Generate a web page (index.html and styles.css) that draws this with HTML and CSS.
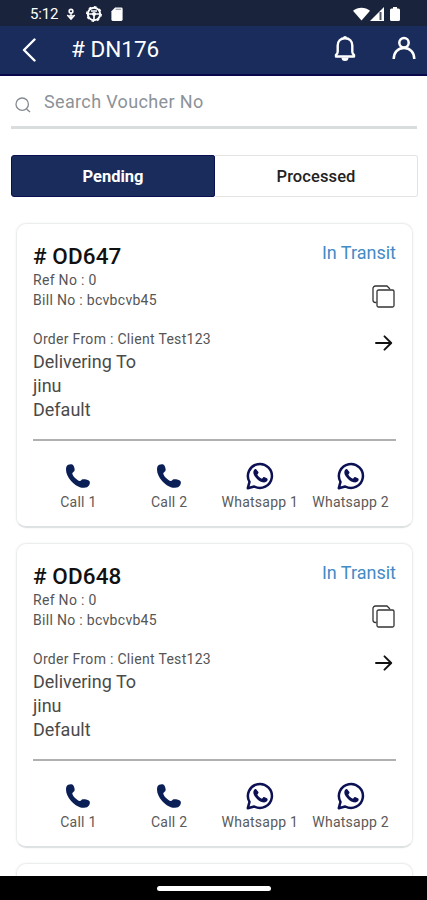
FILE: index.html
```html
<!DOCTYPE html>
<html lang="en">
<head>
    <meta charset="UTF-8">
    <meta name="viewport" content="width=device-width, initial-scale=1.0">
    <title># DN176</title>
    <link rel="stylesheet" href="styles.css">
</head>
<body>
    <!-- Shared icons -->
    <svg class="icon-defs" width="0" height="0">
        <symbol id="icon-copy" viewBox="0 0 23 23">
            <path d="M4.500 17.500H3.500a2.500 2.500 0 0 1-2.500-2.500V3.500A2.500 2.500 0 0 1 3.500 1h11.500l3 3" fill="none" stroke="currentColor" stroke-width="1.300"/>
            <rect x="5" y="5" width="17" height="17" rx="1.500" fill="none" stroke="currentColor" stroke-width="1.300"/>
        </symbol>
        <symbol id="icon-arrow" viewBox="0 0 18 16">
            <path d="M1 8h15M9.500 1.300L16.200 8l-6.700 6.700" fill="none" stroke="currentColor" stroke-width="1.900" stroke-linecap="round" stroke-linejoin="round"/>
        </symbol>
        <symbol id="icon-call" viewBox="0 0 24 24">
            <path d="M2.200.8C4 0 6.300-.1 7.200 1.200c1 1.500 1.600 3.500 1.400 5-.2 1.500-1.700 1.900-2.200 2.800-.5 1 1.100 3.300 2.700 5 1.600 1.600 3.700 3.200 4.800 3 1-.2 1.600-1.600 3-1.800 1.600-.2 4.200.3 5.900 1.200 1.600.9 1.200 3.200.3 4.900-1 1.800-3.300 2.700-5.800 2.500-4.500-.4-9-3.300-12.200-6.900C1.900 13.300 0 9.500 0 5.500 0 3.300.6 1.600 2.200.8z" fill="currentColor"/>
        </symbol>
        <symbol id="icon-whatsapp" viewBox="0 0 28 28">
            <path d="M1.800 26.200l1.700-6.300A12 12 0 1 1 8.200 24.500z" fill="none" stroke="currentColor" stroke-width="2.500" stroke-linejoin="round"/>
            <path d="M10.200 7.200c-.7-.4-1.500-.1-2 .5-1.300 1.600-1.100 3.800.2 6.100 2 3.400 5 5.700 8.200 6.500 2.100.5 4.300-.3 4.900-2 .3-.9.100-1.600-.6-2l-2.300-1.100c-.6-.3-1.100-.2-1.500.3l-1.100 1.300c-2.100-.8-3.700-2.300-4.700-4.300l1-1.200c.3-.4.3-.8.100-1.300z" fill="currentColor"/>
        </symbol>
    </svg>

    <div class="status-bar">
        <span class="time">5:12</span>
        <svg class="status-mic" viewBox="0 0 10 14">
            <circle cx="5" cy="3.500" r="2" fill="none" stroke="currentColor" stroke-width="1.700"/>
            <path d="M1 7.500l4 4.500 4-4.500M1.500 8.500h7M5 6v6" fill="none" stroke="currentColor" stroke-width="1.500"/>
        </svg>
        <svg class="status-wheel" viewBox="0 0 16 16">
            <circle cx="8" cy="8" r="6.200" fill="none" stroke="currentColor" stroke-width="2"/>
            <path d="M2 8h12M8 8v6M5 5h6" fill="none" stroke="currentColor" stroke-width="1.700"/>
            <circle cx="8" cy="8" r="7.300" fill="none" stroke="currentColor" stroke-width="1.300" stroke-dasharray="2.500 3.200"/>
            <circle cx="8" cy="8" r="2" fill="currentColor"/>
        </svg>
        <svg class="status-card" viewBox="0 0 12 15">
            <path d="M4 .5h6.500A1.500 1.500 0 0 1 12 2v11.500a1.500 1.500 0 0 1-1.500 1.500h-9A1.500 1.500 0 0 1 0 13.500V4.500z" fill="currentColor"/>
            <path d="M4.500 2.500h6" stroke="#a5a8b0" stroke-width="1.500"/>
        </svg>
        <div class="status-right">
            <svg class="status-wifi" viewBox="0 0 18 14">
                <path d="M0 3.500C5-.8 13-.8 18 3.500L9 14z" fill="currentColor"/>
            </svg>
            <svg class="status-signal" viewBox="0 0 14 14">
                <path d="M0 14L14 0v14z" fill="currentColor"/>
                <path d="M10.500 5v8" stroke="#4c5262" stroke-width="2"/>
            </svg>
            <svg class="status-battery" viewBox="0 0 10 14">
                <path d="M3 0h4v1.500h1.500A1.500 1.500 0 0 1 10 3v9.500A1.500 1.500 0 0 1 8.500 14h-7A1.500 1.500 0 0 1 0 12.500V3a1.500 1.500 0 0 1 1.500-1.500H3z" fill="currentColor"/>
            </svg>
        </div>
    </div>

    <header class="header">
        <svg class="back" viewBox="0 0 14 24">
            <path d="M12.500 1.500L2 12l10.500 10.500" fill="none" stroke="currentColor" stroke-width="2.400" stroke-linecap="round" stroke-linejoin="round"/>
        </svg>
        <h1># DN176</h1>
        <svg class="bell" viewBox="0 0 22 26">
            <path d="M11 2.200c-4.500 0-7.300 3.200-7.300 7.300v6.300c0 1.200-.5 2.200-1.700 3.200v1.500h18V19c-1.200-1-1.700-2-1.700-3.200V9.500c0-4.100-2.800-7.300-7.300-7.300z" fill="none" stroke="currentColor" stroke-width="2.400" stroke-linejoin="round"/>
            <path d="M9 2a2 2 0 0 1 4 0zM7.500 21.500h7a3.500 3.500 0 0 1-7 0z" fill="currentColor"/>
        </svg>
        <svg class="user" viewBox="0 0 24 24">
            <circle cx="12" cy="6.800" r="4.700" fill="none" stroke="currentColor" stroke-width="2.500"/>
            <path d="M1.700 23c0-6.500 4-11 10.300-11s10.300 4.500 10.300 11" fill="none" stroke="currentColor" stroke-width="2.500"/>
        </svg>
    </header>

    <main class="content">
        <div class="search">
            <svg class="search-icon" viewBox="0 0 16 16">
                <circle cx="7.200" cy="7.200" r="6.200" fill="none" stroke="currentColor" stroke-width="1.300"/>
                <path d="M11.500 12l3.500 3" stroke="currentColor" stroke-width="1.500"/>
            </svg>
            <span class="placeholder">Search Voucher No</span>
        </div>

        <div class="tabs">
            <div class="tab active">Pending</div>
            <div class="tab">Processed</div>
        </div>

        <div class="orders">
            <div class="card">
                <div class="card-body">
                    <div class="details">
                        <h2># OD647</h2>
                        <p class="small">Ref No : 0</p>
                        <p class="small bill">Bill No : bcvbcvb45</p>
                        <p class="small">Order From : Client Test123</p>
                        <p>Delivering To</p>
                        <p>jinu</p>
                        <p>Default</p>
                    </div>
                    <div class="side">
                        <span class="status">In Transit</span>
                        <svg class="copy"><use href="#icon-copy"/></svg>
                        <svg class="arrow"><use href="#icon-arrow"/></svg>
                    </div>
                </div>
                <div class="actions">
                    <div class="action"><svg class="call"><use href="#icon-call"/></svg><span>Call 1</span></div>
                    <div class="action"><svg class="call"><use href="#icon-call"/></svg><span>Call 2</span></div>
                    <div class="action"><svg><use href="#icon-whatsapp"/></svg><span>Whatsapp 1</span></div>
                    <div class="action"><svg><use href="#icon-whatsapp"/></svg><span>Whatsapp 2</span></div>
                </div>
            </div>

            <div class="card">
                <div class="card-body">
                    <div class="details">
                        <h2># OD648</h2>
                        <p class="small">Ref No : 0</p>
                        <p class="small bill">Bill No : bcvbcvb45</p>
                        <p class="small">Order From : Client Test123</p>
                        <p>Delivering To</p>
                        <p>jinu</p>
                        <p>Default</p>
                    </div>
                    <div class="side">
                        <span class="status">In Transit</span>
                        <svg class="copy"><use href="#icon-copy"/></svg>
                        <svg class="arrow"><use href="#icon-arrow"/></svg>
                    </div>
                </div>
                <div class="actions">
                    <div class="action"><svg class="call"><use href="#icon-call"/></svg><span>Call 1</span></div>
                    <div class="action"><svg class="call"><use href="#icon-call"/></svg><span>Call 2</span></div>
                    <div class="action"><svg><use href="#icon-whatsapp"/></svg><span>Whatsapp 1</span></div>
                    <div class="action"><svg><use href="#icon-whatsapp"/></svg><span>Whatsapp 2</span></div>
                </div>
            </div>

            <div class="card"></div>
        </div>
    </main>

    <div class="nav-bar"><div class="nav-handle"></div></div>
</body>
</html>
```

FILE: styles.css
```css
* { box-sizing: border-box; }
body { font-family: Roboto, sans-serif; margin: 0; height: 900px; overflow: hidden; display: flex; flex-direction: column; background: #fff; color: #4a4a4a; }
h1, h2, p { margin: 0; }
svg { display: block; flex: none; }
.icon-defs { position: absolute; }

/* Status bar */
.status-bar { flex: none; height: 26px; padding: 2px 27px 0 30px; display: flex; align-items: center; background: #1a233c; color: #fff; }
.time { width: 36px; font-size: 15px; letter-spacing: -0.2px; }
.status-mic { width: 10px; height: 13px; }
.status-wheel { width: 16px; height: 16px; margin-left: 10px; }
.status-card { width: 12px; height: 14px; margin-left: 9px; }
.status-right { display: flex; align-items: center; margin: -1px 0 0 auto; }
.status-wifi { width: 17px; height: 14px; }
.status-signal { width: 14px; height: 14px; }
.status-battery { width: 10px; height: 14px; margin-left: 6px; }

/* Header */
.header { flex: none; height: 50px; padding: 0 11px 1px 22px; display: flex; align-items: center; background: #1a2c5b; border-bottom: 2px solid #09084d; color: #fff; }
.back { width: 14px; height: 24px; }
.header h1 { margin: -2px 0 0 35px; font-size: 22.5px; font-weight: 400; line-height: 28px; }
.bell { width: 22px; height: 26px; margin: -2px 0 0 auto; }
.user { width: 24px; height: 24px; margin: -3px 0 0 36px; }

.content { flex: 1; min-height: 0; overflow: hidden; padding: 0 9px 0 11px; }
.search { height: 53px; margin-right: 1px; padding: 0 4px; display: flex; align-items: center; border-bottom: 3px solid #dadddd; color: #858b90; }
.search-icon { width: 16px; height: 16px; margin-top: 7px; }
.placeholder { margin-left: 13px; font-size: 18px; letter-spacing: 0.35px; color: #8c9298; }

.tabs { display: flex; height: 42px; margin-top: 26px; }
.tab { flex: 1; padding-top: 1px; display: flex; align-items: center; justify-content: center; border: 1px solid #e2e4e4; border-left: none; border-radius: 0 3px 3px 0; font-size: 16.5px; letter-spacing: 0.1px; font-weight: 500; color: #222; }
.tab.active { background: #1a2c5b; border: 1px solid #0b1052; border-radius: 3px 2px 2px 3px; color: #fff; font-weight: 700; letter-spacing: 0; }

/* Order cards */
.orders { display: flex; flex-direction: column; gap: 15px; padding: 26px 5px 0 5px; }
.card { flex: none; height: 305px; padding: 18px 16px 0; border: 1px solid #eceeee; border-bottom: 2px solid #dfe2e3; border-radius: 10px; box-shadow: 0 0 2px #e8ebeb; }
.card-body { display: flex; justify-content: space-between; height: 199px; border-bottom: 2px solid #b0b0b0; }
.details p { font-size: 18px; line-height: 24px; }
.details h2 { font-size: 22.5px; line-height: 28px; letter-spacing: 0.1px; font-weight: 500; color: #111; }
.details .small { font-size: 14px; line-height: 20px; letter-spacing: 0.3px; color: #555; }
.details .bill { margin-bottom: 19px; }
.details .small + p:not(.small) { padding-top: 1px; line-height: 24px; }
.side { display: flex; flex-direction: column; align-items: flex-end; }
.status { font-size: 18px; line-height: 22px; color: #438bc5; }
.copy { width: 23px; height: 23px; margin: 21px 1px 0 0; color: #333; }
.arrow { width: 18px; height: 16px; margin: 27px 3px 0 0; color: #111; }
.actions { display: grid; grid-template-columns: repeat(4, 1fr); padding-top: 21px; }
.action { display: flex; flex-direction: column; align-items: center; font-size: 14px; line-height: 18px; letter-spacing: 0.25px; white-space: nowrap; color: #5a5a5a; }
.action svg { width: 28px; height: 28px; margin-bottom: 3px; color: #0b1153; }
.action .call { width: 24px; height: 24px; margin: 2px 0 5px; color: #0b1f57; }

/* Gesture bar */
.nav-bar { flex: none; height: 24px; display: flex; align-items: center; justify-content: center; background: #000; }
.nav-handle { width: 114px; height: 5px; border-radius: 3px; background: #fff; }
```
